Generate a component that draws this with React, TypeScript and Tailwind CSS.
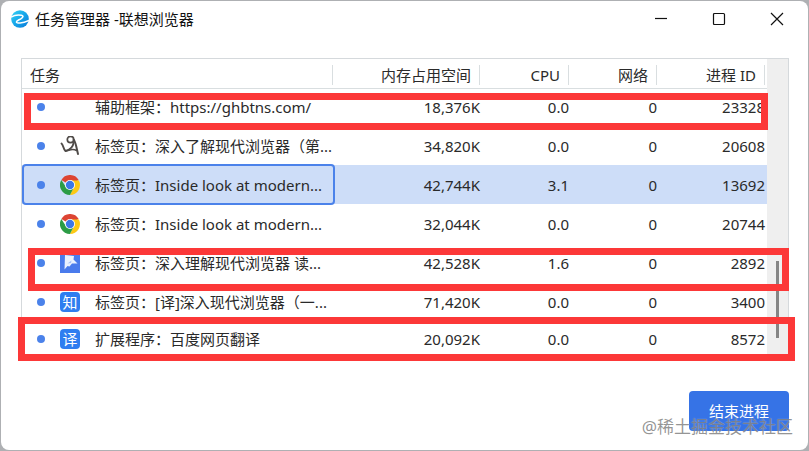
import clsx from "clsx";
import type { ReactNode } from "react";

type Task = {
    name: string;
    icon?: ReactNode;
    memory: string;
    cpu: string;
    network: string;
    pid: string;
    selected?: boolean;
};

function BrowserLogo() {
    return (
        <svg viewBox="0 0 18 18" className="size-[18px]" aria-hidden="true">
            <defs>
                <linearGradient id="logo" x1="0" y1="0" x2="1" y2="1">
                    <stop offset="0" stopColor="#35d3f4" />
                    <stop offset="0.5" stopColor="#16a6ea" />
                    <stop offset="1" stopColor="#0a78d8" />
                </linearGradient>
            </defs>
            <circle cx="9" cy="9" r="8.8" fill="url(#logo)" />
            <path d="M0 7C3 5.200 7.500 4.600 10.500 5.200C12.800 5.800 12 7.200 10.500 8.300C8 10 5.500 10.600 5.400 12C5.400 13.600 11 13.600 18 10.500" fill="none" stroke="#fff" strokeWidth="1.500" />
        </svg>
    );
}

function ChromeIcon() {
    return (
        <svg viewBox="0 0 48 48" className="size-5" aria-hidden="true">
            <path d="M24 24 3.200 12A24 24 0 0 1 44.800 12Z" fill="#dd4433" />
            <path d="M24 13H45.300A24 24 0 0 1 24 48L33.500 29.500Z" fill="#fcc916" />
            <path d="M3.200 12 14.500 29.500 24 35 33.500 29.500 24 48A24 24 0 0 1 3.200 12Z" fill="#2c9c46" />
            <circle cx="24" cy="24" r="12" fill="#fff" />
            <circle cx="24" cy="24" r="10" fill="#3b78e7" />
        </svg>
    );
}

function SketchIcon() {
    return (
        <svg viewBox="0 0 20 20" className="size-5" fill="none" stroke="#4f4b48" strokeLinecap="round" aria-hidden="true">
            <circle cx="10.500" cy="3.500" r="3.200" strokeWidth="1.700" />
            <path d="M13.700 3.500C16 7 16.500 12 18 18" strokeWidth="2" />
            <path d="M1.500 7.500C3.500 9 3 13 5.500 15C9 14 13 11.500 13.500 7" strokeWidth="1.900" />
            <path d="M5.500 15C9 14.800 12 12 16.500 14.500" strokeWidth="1.500" />
        </svg>
    );
}

function FlagIcon() {
    return (
        <svg viewBox="0 0 20 20" className="size-5" aria-hidden="true">
            <path d="M0 0H20V20H0Z" fill="#4a7bec" />
            <path d="M5 2 14 3 13.500 6.500 17.500 10.500 12 10.500 9.500 13.500 7.500 13 4.500 16.500Z" fill="#eaf1fe" />
            <path d="M7.500 10.500 11.500 7.500 11 10Z" fill="#a7c0f7" />
        </svg>
    );
}

function GlyphIcon({ children }: { children: string }) {
    return (
        <span className="flex size-5 items-center justify-center rounded bg-[#2f7df0] text-[15px] leading-5 text-white">
            {children}
        </span>
    );
}

const tasks: Task[] = [
    { name: "辅助框架：https://ghbtns.com/", memory: "18,376K", cpu: "0.0", network: "0", pid: "23328" },
    { name: "标签页：深入了解现代浏览器（第...", icon: <SketchIcon />, memory: "34,820K", cpu: "0.0", network: "0", pid: "20608" },
    { name: "标签页：Inside look at modern...", icon: <ChromeIcon />, memory: "42,744K", cpu: "3.1", network: "0", pid: "13692", selected: true },
    { name: "标签页：Inside look at modern...", icon: <ChromeIcon />, memory: "32,044K", cpu: "0.0", network: "0", pid: "20744" },
    { name: "标签页：深入理解现代浏览器 读...", icon: <FlagIcon />, memory: "42,528K", cpu: "1.6", network: "0", pid: "2892" },
    { name: "标签页：[译]深入现代浏览器（一...", icon: <GlyphIcon>知</GlyphIcon>, memory: "71,420K", cpu: "0.0", network: "0", pid: "3400" },
    { name: "扩展程序：百度网页翻译", icon: <GlyphIcon>译</GlyphIcon>, memory: "20,092K", cpu: "0.0", network: "0", pid: "8572" },
];

const columns = ["内存占用空间", "CPU", "网络", "进程 ID"];

const windowControls = [
    { label: "最小化", d: "M1 6.500H13" },
    { label: "最大化", d: "M2.500 1.500H11.500Q12.500 1.500 12.500 2.500V11.500Q12.500 12.500 11.500 12.500H2.500Q1.500 12.500 1.500 11.500V2.500Q1.500 1.500 2.500 1.500Z" },
    { label: "关闭", d: "M1 1 13 13M13 1 1 13" },
];

function TitleBar() {
    return (
        <header className="flex h-9 items-center justify-between">
            <div className="flex items-center gap-1.5 pl-2.5 text-[#111]">
                <BrowserLogo />
                <h1>任务管理器 -联想浏览器</h1>
            </div>
            <div className="flex pr-0.5">
                {windowControls.map(({ label, d }) => (
                    <button key={label} type="button" aria-label={label} className="flex h-9 w-[58px] items-center justify-center">
                        <svg viewBox="0 0 14 14" className="size-3.5" fill="none" stroke="#111" strokeWidth="1.200">
                            <path d={d} />
                        </svg>
                    </button>
                ))}
            </div>
        </header>
    );
}

function TaskTable() {
    return (
        <table className="w-full table-fixed border-collapse">
            <colgroup>
                <col />
                <col className="w-[147px]" />
                <col className="w-[89px]" />
                <col className="w-[88px]" />
                <col className="w-[108px]" />
                <col className="w-0.5" />
            </colgroup>
            <thead>
                <tr className="h-[29px] border-b border-[#d9dee0]">
                    <th className="p-0 text-left font-normal">
                        <div className="mt-1 border-r border-[#d9dee0] pl-2 leading-5">任务</div>
                    </th>
                    {columns.map((column) => (
                        <th key={column} className="p-0 text-right font-normal">
                            <div className="mt-1 border-r border-[#d9dee0] pr-2 leading-5">{column}</div>
                        </th>
                    ))}
                    <td />
                </tr>
            </thead>
            <tbody>
                {tasks.map((task) => (
                    <tr
                        key={task.pid}
                        className={clsx("h-[39px] text-right first:h-[38px] last:h-9", task.selected && "bg-[#cdddf8]")}
                    >
                        <td className="relative p-0 text-left">
                            {task.selected && (
                                <span className="absolute -inset-y-px left-0 -right-0.5 rounded border-2 border-[#4b82ea]" />
                            )}
                            <div className="flex items-center whitespace-nowrap pl-[15px]">
                                <span className="size-2 shrink-0 rounded-full bg-[#4b82ea]" />
                                <span className="mx-[15px] size-5 shrink-0">{task.icon}</span>
                                <span>{task.name}</span>
                            </div>
                        </td>
                        <td className="p-0">{task.memory}</td>
                        <td className="p-0">{task.cpu}</td>
                        <td className="p-0">{task.network}</td>
                        <td className="p-0">{task.pid}</td>
                        <td className="p-0" />
                    </tr>
                ))}
            </tbody>
        </table>
    );
}

export default function App() {
    return (
        <div className="flex min-h-screen bg-[#aeb0b3] p-px font-['Noto_Sans','Noto_Sans_CJK_SC',sans-serif] text-[15px] leading-5 text-[#2a2a2a]">
            <div className="flex flex-1 flex-col rounded-lg bg-white pb-[19px]">
                <TitleBar />

                <main className="relative ml-5 mr-[19px] mt-[21px] flex border border-[#d5d9dc]">
                    <div className="min-w-0 flex-1">
                        <TaskTable />
                    </div>
                    <div className="flex w-[21px] flex-col items-center bg-[#efefef]">
                        <div className="mt-[202px] h-[77px] w-[3px] bg-[#858585]" />
                    </div>

                    {/* Highlight boxes */}
                    <div className="absolute left-0.5 right-5 top-[34px] h-[37px] border-[7px] border-[#fc3838]" />
                    <div className="absolute -right-px left-1.5 top-[189px] h-[43px] border-[7px] border-[#fc3838]" />
                    <div className="absolute -left-1 -right-[7px] top-[258px] h-11 border-[7px] border-[#fc3838]" />
                </main>

                <footer className="relative ml-5 mr-[19px] mt-[33px] flex justify-end">
                    <button type="button" className="h-10 w-[100px] rounded bg-[#3673e6] text-white">
                        结束进程
                    </button>
                    <span className="absolute -right-1 top-6 whitespace-nowrap text-[17px] leading-6 text-[#666]/70 text-shadow-[0_0_1px_#ffffff99]">
                        @稀土掘金技术社区
                    </span>
                </footer>
            </div>
        </div>
    );
}
